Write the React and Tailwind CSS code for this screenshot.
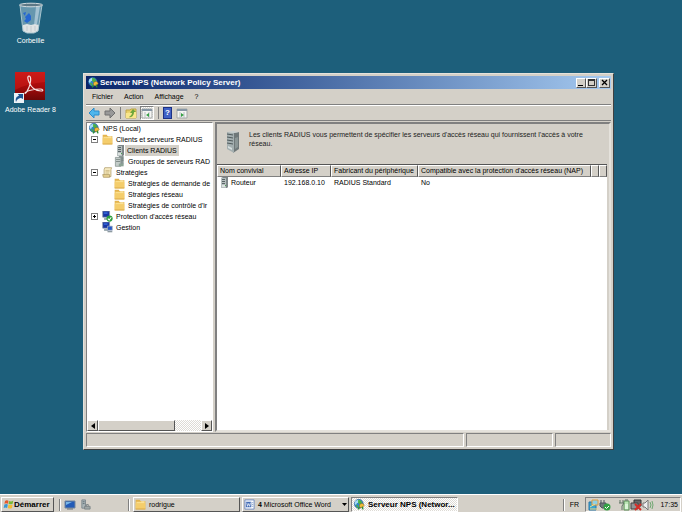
import { useState } from "react";

function GlobeIcon({ className = "h-[11px] w-[11px]" }) {
  return (
    <svg viewBox="0 0 16 16" className={`shrink-0 ${className}`} aria-hidden="true">
      <circle cx="7" cy="7" r="6.5" fill="#2d82d0" stroke="#1b4f80" strokeWidth=".7" />
      <path d="M2 3 6 1l3 1-2 3-3 1-1 3-2-2Z" fill="#a7dcf5" />
      <path d="M6 1l4 1 2 3-3 3-3-2ZM3 8l3 1 1 4-3-1Z" fill="#4caf45" />
      <path d="M8 8 12 6l3 3-3 4-4-1Z" fill="#f0b936" stroke="#8a6519" strokeWidth=".7" />
      <path d="M8 12 6 15M12 11l1 4" stroke="#2b8b37" strokeWidth="2" />
    </svg>
  );
}

function FolderIcon() {
  return (
    <svg viewBox="0 0 16 16" className="h-[11px] w-[11px] shrink-0" aria-hidden="true">
      <path d="M1 1h6l1 2h7v12H1Z" fill="#e3b44e" />
      <path d="M2 4h12v10H2Z" fill="#fbdf8c" />
      <path d="M1 6h14v9H1Z" fill="#f4cd6c" />
      <path d="M1 14.500h14" stroke="#cf9c3c" />
      <path d="M9 4h5" stroke="#fff3c9" />
    </svg>
  );
}

function ServerIcon({ className = "h-[11px] w-[7px]" }) {
  return (
    <svg viewBox="0 0 7 11" className={`shrink-0 ${className}`} aria-hidden="true">
      <path d="M0 1 2 0h5v10l-1 1H0Z" fill="#7d8688" />
      <path d="M0 1h5v10H0Z" fill="#b6bfbf" />
      <path d="M1 2.500h3M1 4.500h3M1 6.500h3" stroke="#596466" />
      <path d="M1 8h3v2H1Z" fill="#dbe1df" />
      <path d="M4 8h1v1H4Z" fill="#48a452" />
    </svg>
  );
}

function ServersIcon() {
  return (
    <svg viewBox="0 0 16 16" className="h-[11px] w-[11px] shrink-0" aria-hidden="true">
      <path d="M7 0h7v12H7Z" fill="#8b9897" />
      <path d="M2 2h8v13H2Z" fill="#c3ccc9" stroke="#7e8a88" />
      <path d="M3 5h6M3 8h6M11 3h3M11 6h3" stroke="#66716f" />
      <path d="M7 11h7v4H7Z" fill="#8ba295" />
    </svg>
  );
}

function BigServerIcon() {
  return (
    <svg viewBox="0 0 16 24" className="h-[24px] w-[16px] shrink-0" aria-hidden="true">
      <path d="m8 3 6-1v17l-6 4Z" fill="#6f7879" />
      <path d="m10 8 3-1v10l-3 2Z" fill="#8b9696" />
      <path d="M2 2 9 3v20l-7-4Z" fill="#a4afb0" />
      <path d="m2 2 6-1 6 1-5 1Z" fill="#c8cfcf" />
      <path d="m2 4 6 1M2 7l6 1M2 10l6 1M2 13l6 1" stroke="#4e595b" />
      <path d="m3 16 4 2v2l-4-2Z" fill="#d6dfdf" />
    </svg>
  );
}

function ScrollIcon() {
  return (
    <svg viewBox="0 0 16 16" className="h-[11px] w-[11px] shrink-0" aria-hidden="true">
      <path d="M4 1h10l-1 3v10H3V4Z" fill="#f7ecc4" stroke="#a9935e" />
      <path d="M1 11h10v4H2Z" fill="#e6d192" stroke="#a9935e" />
      <path d="M5 5h6M5 7h6M5 9h5" stroke="#c4ad73" />
    </svg>
  );
}

function ComputerIcon({ badge = false }) {
  return (
    <svg viewBox="0 0 16 16" className="h-[11px] w-[11px] shrink-0" aria-hidden="true">
      <path d="M1 0h10v9H1Z" fill="#1836a6" stroke="#8691a0" />
      <path d="M3 2h5v2H3Z" fill="#396ee1" />
      <path d="M3 10h6v3H3Z" fill="#9eacb0" />
      {badge ? (
        <>
          <circle cx="11" cy="11" r="4.500" fill="#2b9d3c" />
          <path d="m8.500 11 2 2 3-4" fill="none" stroke="#fff" strokeWidth="1.500" />
        </>
      ) : (
        <>
          <path d="M8 6h7v6H8Z" fill="#2457c7" stroke="#a7afb9" />
          <path d="M8 13h7v2H8Z" fill="#8e9ba2" />
        </>
      )}
    </svg>
  );
}

function RecycleBin() {
  return (
    <svg viewBox="0 0 26 32" className="h-[32px] w-[26px]" aria-hidden="true">
      <path d="M2 3h22l-4 26-4 2H9l-4-2Z" fill="#7fa9bf" fillOpacity=".75" />
      <path d="m5 23 4-1 4 1 4-1 4 1-1 6-4 2H9l-4-2Z" fill="#dfe3e4" />
      <path d="m18 5 4-1-3 18-3 1Z" fill="#cbe0e9" fillOpacity=".6" />
      <path d="m7 15 4-4 2 3v4l-4 3-3-2 2-2Zm-2-4 3-1-1 4Z" fill="#2467d1" />
      <path d="M9 24v5M13 24v6M17 24v5" stroke="#c3cbcf" />
      <path d="M2 3 5 29l4 2h7l4-2L24 3" fill="none" stroke="#a9c5cf" />
      <ellipse cx="13" cy="3" rx="11.500" ry="1.800" fill="#5d7886" stroke="#d3dcdf" />
    </svg>
  );
}

function AdobeIcon() {
  return (
    <svg viewBox="0 0 32 32" className="h-[32px] w-[32px]" aria-hidden="true">
      <defs>
        <linearGradient id="adobe" x1="0" y1="0" x2="0" y2="1">
          <stop stopColor="#c41414" />
          <stop offset=".5" stopColor="#a80b0b" />
          <stop offset="1" stopColor="#6d0606" />
        </linearGradient>
      </defs>
      <path d="M1 1h30v28H1Z" fill="url(#adobe)" />
      <path d="M1 1h30v10Q14 12 1 19Z" fill="#e02822" fillOpacity=".35" />
      <path d="M15 5c-2 0-1 4 0 6 2 5 6 9 12 9 3 0 2-2-1-2-6 0-14 2-15 4 0 2 4-4 5-9 1-4 1-8-1-8Z" fill="none" stroke="#f7e2e2" strokeWidth="1.200" />
      <path d="M0 22h10v10H0Z" fill="#edf2f7" />
      <path d="M2 31c-1-4 1-6 3-6l-1-2h5v5l-2-1c-2 0-4 1-5 4Z" fill="#1e5492" />
    </svg>
  );
}

function ArrowIcon({ forward = false }) {
  return (
    <svg viewBox="0 0 12 12" className="h-[12px] w-[12px]" aria-hidden="true">
      {forward ? (
        <path d="M1 4h5V1l5 5-5 5V8H1Z" fill="#999" stroke="#707070" />
      ) : (
        <path d="M11 4H6V1L1 6l5 5V8h5Z" fill="#4fb6ec" stroke="#2c8ccc" />
      )}
    </svg>
  );
}

function UpFolderIcon() {
  return (
    <svg viewBox="0 0 12 12" className="h-[12px] w-[12px]" aria-hidden="true">
      <path d="M1 3h4l1-1h5v9H1Z" fill="#e8cf66" stroke="#c0a648" />
      <path d="m1 6 10-1v6H1Z" fill="#f9e68b" />
      <path d="M4 10c2-1 3-3 3-4H5l3-4 3 3H9c0 3-2 6-5 5Z" fill="#6da63c" />
    </svg>
  );
}

function PanelIcon({ right = false }) {
  return (
    <svg viewBox="0 0 12 12" className="h-[12px] w-[12px]" aria-hidden="true">
      <path d="M1 2h10v9H1Z" fill="#f5f5f3" stroke="#a4a8a8" />
      <path d="M1 3h10" stroke="#8696a5" strokeWidth="2" />
      <path d="M4 5v6M8 5v6" stroke="#b5bcbf" />
      <path d={right ? "m5 6 3 2-3 2Z" : "m8 6-3 2 3 2Z"} fill="#35a044" />
    </svg>
  );
}

function HelpIcon() {
  return (
    <span className="flex h-[12px] w-[9px] items-center justify-center border border-[#1c3186] bg-[#3f60c5] text-[8px] font-bold text-white">
      ?
    </span>
  );
}

function StartIcon() {
  return (
    <svg viewBox="0 0 16 16" className="h-[11px] w-[11px] shrink-0" aria-hidden="true">
      <path d="M3 3c2-2 4-1 5 0L7 7C5 6 4 6 2 7Z" fill="#e6582c" />
      <path d="M9 3c2 1 4 1 6-1l-1 5c-2 1-4 1-6 0Z" fill="#78b934" />
      <path d="M2 8c2-1 4-1 5 0l-1 5c-2-1-3-1-5 0Z" fill="#3797d4" />
      <path d="M8 8c2 1 4 1 6 0l-1 5c-2 1-4 1-6 0Z" fill="#f3bd35" />
    </svg>
  );
}

function DesktopIcon() {
  return (
    <svg viewBox="0 0 12 10" className="h-[10px] w-[12px]" aria-hidden="true">
      <path d="M1 1h10v7H1Z" fill="#225bb7" stroke="#73879c" />
      <path d="m2 2 6 0-6 3Z" fill="#77b6e8" />
      <path d="M3 9h6" stroke="#66717a" />
    </svg>
  );
}

function ManagerIcon() {
  return (
    <svg viewBox="0 0 12 12" className="h-[11px] w-[11px]" aria-hidden="true">
      <path d="M2 1h4v9H2Z" fill="#aab5b8" stroke="#7d888d" />
      <path d="M3 3h2M3 5h2" stroke="#5d6d74" />
      <path d="M5 8h6v3H5Z" fill="#a0a8a8" stroke="#7c8485" />
      <path d="M7 8V6h2v2" fill="none" stroke="#7c8485" />
    </svg>
  );
}

function WordIcon() {
  return (
    <svg viewBox="0 0 12 12" className="h-[11px] w-[11px] shrink-0" aria-hidden="true">
      <path d="M1 1h10v10H1Z" fill="#fff" stroke="#6b88c0" />
      <path d="M2 3h6v6H2Z" fill="#3e68b4" />
      <path d="m3 4 .8 4L5 5l1.200 3L7 4" stroke="#fff" fill="none" strokeWidth=".8" />
      <path d="M9 4h1M9 6h1M9 8h1" stroke="#6b8dbd" />
    </svg>
  );
}

function TrayIcons() {
  return (
    <svg viewBox="0 0 66 12" className="h-[12px] w-[66px]" aria-hidden="true">
      <path d="M1 3h7v8H1Z" fill="#39a5d0" stroke="#2877aa" />
      <path d="M4 1h6v5H4Z" fill="#8ed0e5" stroke="#e39c3d" />
      <path d="m2 8 5-3M2 10h8" stroke="#f4dc87" />
      <path d="M13 1v3M16 1v3M12 4h6v3l-2 2h-2l-2-2Z" fill="#6e777c" stroke="#4b555c" />
      <circle cx="19" cy="8" r="3.500" fill="#31a144" />
      <path d="m17 8 1.500 1.500L21 7" stroke="#fff" fill="none" />
      <path d="M36 2h5v9h-5Z" fill="#bbe6b5" stroke="#5c8e5b" />
      <path d="M37 1h3M32 1v3M35 1v3M31 4h5l-2 3v4" fill="none" stroke="#5f7465" />
      <path d="M37 5h3v5h-3Z" fill="#dbf4d8" />
      <path d="M46 1h7v6h-7Z" fill="#66686a" stroke="#333" />
      <path d="M43 4h7v6h-7Z" fill="#909597" stroke="#444" />
      <path d="m47 5 6 6M53 5l-6 6" stroke="#d42d28" strokeWidth="2" />
      <path d="M55 4h2l3-3v10l-3-3h-2Z" fill="#eee" stroke="#777" />
      <path d="M62 3q2 3 0 6M64 2q2 4 0 8" stroke="#6ea670" fill="none" />
    </svg>
  );
}

const treeItems = [
  { label: "NPS (Local)", icon: <GlobeIcon />, indent: "pl-[2px]" },
  { label: "Clients et serveurs RADIUS", icon: <FolderIcon />, indent: "pl-[4px]", toggle: "-" },
  { label: "Clients RADIUS", icon: <ServerIcon />, indent: "pl-[30px]" },
  { label: "Groupes de serveurs RAD", icon: <ServersIcon />, indent: "pl-[27px]" },
  { label: "Stratégies", icon: <ScrollIcon />, indent: "pl-[4px]", toggle: "-" },
  { label: "Stratégies de demande de", icon: <FolderIcon />, indent: "pl-[27px]" },
  { label: "Stratégies réseau", icon: <FolderIcon />, indent: "pl-[27px]" },
  { label: "Stratégies de contrôle d'ir", icon: <FolderIcon />, indent: "pl-[27px]" },
  { label: "Protection d'accès réseau", icon: <ComputerIcon badge />, indent: "pl-[4px]", toggle: "+" },
  { label: "Gestion", icon: <ComputerIcon />, indent: "pl-[15px]" },
];

const headers = ["Nom convivial", "Adresse IP", "Fabricant du périphérique", "Compatible avec la protection d'accès réseau (NAP)", "", ""];

const raised = "border border-t-white border-l-white border-r-[#555] border-b-[#555] bg-[#d4d0c8]";
const sunken = "border border-t-[#808080] border-l-[#808080] border-r-white border-b-white";
const checker = "bg-[repeating-conic-gradient(#fff_0_25%,#dedbd5_0_50%)] bg-[size:2px_2px]";

function TitleBar() {
  return (
    <header className="flex h-[13px] shrink-0 items-center bg-linear-to-r from-[#0a246a] to-[#a6caf0] pr-px pl-[2px] text-white">
      <GlobeIcon />
      <h1 className="ml-px flex-1 truncate text-[8px] font-bold">
        Serveur NPS (Network Policy Server)
      </h1>
      <button type="button" aria-label="Réduire" className={`flex h-[10px] w-[10px] items-end p-px ${raised}`}>
        <span className="h-px w-[5px] bg-black" />
      </button>
      <button type="button" aria-label="Agrandir" className={`flex h-[10px] w-[11px] items-center justify-center ${raised}`}>
        <span className="h-[7px] w-[7px] border border-t-2 border-[#333]" />
      </button>
      <button type="button" aria-label="Fermer" className={`ml-[2px] flex h-[10px] w-[11px] items-center justify-center ${raised}`}>
        <svg viewBox="0 0 7 7" className="h-[7px] w-[7px]" aria-hidden="true">
          <path d="m1 1 5 5M6 1 1 6" stroke="#000" strokeWidth="1.300" />
        </svg>
      </button>
    </header>
  );
}

function Toolbar() {
  return (
    <div className="flex h-[16px] shrink-0 items-center border-t border-b border-t-white border-b-[#808080] px-[2px]">
      <button type="button" aria-label="Précédent"><ArrowIcon /></button>
      <button type="button" aria-label="Suivant" className="ml-[4px]"><ArrowIcon forward /></button>
      <span className="mx-[4px] h-[12px] w-px bg-[#808080]" />
      <button type="button" aria-label="Dossier parent"><UpFolderIcon /></button>
      <button type="button" aria-label="Arborescence" className={`ml-[3px] ${sunken} ${checker}`}><PanelIcon /></button>
      <span className="mx-[4px] h-[12px] w-px bg-[#808080]" />
      <button type="button" aria-label="Aide"><HelpIcon /></button>
      <button type="button" aria-label="Volet Actions" className="ml-[4px]"><PanelIcon right /></button>
    </div>
  );
}

function Tree() {
  const [selected, setSelected] = useState("Clients RADIUS");

  return (
    <nav className={`flex w-[127px] shrink-0 flex-col bg-white ${sunken}`}>
      <ul className="flex-1 overflow-hidden">
        {treeItems.map((item) => (
          <li key={item.label} className={`flex h-[11px] items-center ${item.indent}`}>
            {item.toggle && (
              <button type="button" aria-label={item.label} className="mr-[4px] flex h-[7px] w-[7px] shrink-0 items-center justify-center border border-[#808080]">
                <svg viewBox="0 0 3 3" className="h-[3px] w-[3px]" aria-hidden="true">
                  <path d={item.toggle === "+" ? "M0 1.500h3M1.500 0v3" : "M0 1.500h3"} stroke="#000" />
                </svg>
              </button>
            )}
            {item.icon}
            <button
              type="button"
              onClick={() => setSelected(item.label)}
              className={`ml-px h-[11px] px-[2px] whitespace-nowrap ${selected === item.label ? "bg-[#d4d0c8]" : ""}`}
            >
              {item.label}
            </button>
          </li>
        ))}
      </ul>
      <div className={`flex h-[11px] shrink-0 ${checker}`}>
        <button type="button" aria-label="Défiler à gauche" className={`flex w-[11px] items-center justify-center ${raised}`}>
          <svg viewBox="0 0 4 6" className="h-[6px] w-[4px]" aria-hidden="true"><path d="M4 0v6L0 3Z" /></svg>
        </button>
        <span className={`w-[77px] ${raised}`} />
        <button type="button" aria-label="Défiler à droite" className={`ml-auto flex w-[11px] items-center justify-center ${raised}`}>
          <svg viewBox="0 0 4 6" className="h-[6px] w-[4px]" aria-hidden="true"><path d="M0 0v6l4-3Z" /></svg>
        </button>
      </div>
    </nav>
  );
}

function ClientList() {
  return (
    <section className="ml-[2px] flex min-w-0 flex-1 flex-col border-2 border-t-[#808080] border-r-[#e5e2dc] border-b-[#e5e2dc] border-l-[#808080]">
      <div className="flex h-[40px] shrink-0 items-start px-[8px] pt-[6px]">
        <BigServerIcon />
        <p className="ml-[8px] max-w-[352px] leading-[9px] text-[#222]">
          Les clients RADIUS vous permettent de spécifier les serveurs d'accès réseau qui fournissent l'accès à votre réseau.
        </p>
      </div>
      <div className="mr-[2px] flex-1 border-t border-t-[#555] bg-white">
        <table className="w-full table-fixed border-separate border-spacing-0 text-left">
          <colgroup>
            <col className="w-[64px]" />
            <col className="w-[50px]" />
            <col className="w-[87px]" />
            <col className="w-[173px]" />
            <col className="w-[8px]" />
            <col />
          </colgroup>
          <thead>
            <tr>
              {headers.map((header, i) => (
                <th key={i} className="h-[11px] overflow-hidden border border-t-white border-r-[#555] border-b-[#808080] border-l-white bg-[#d4d0c8] p-0 pl-[2px] font-normal whitespace-nowrap">
                  {header}
                </th>
              ))}
            </tr>
          </thead>
          <tbody>
            <tr className="h-[11px]">
              <td className="p-0 pl-[4px]">
                <span className="flex items-center gap-[3px]"><ServerIcon />Routeur</span>
              </td>
              <td className="p-0 pl-[3px] whitespace-nowrap">192.168.0.10</td>
              <td className="p-0 pl-[3px]">RADIUS Standard</td>
              <td className="p-0 pl-[3px]">No</td>
              <td className="p-0" />
              <td className="p-0" />
            </tr>
          </tbody>
        </table>
      </div>
    </section>
  );
}

function Taskbar() {
  const separator = "h-[12px] w-px shrink-0 bg-[#808080] shadow-[1px_0_0_#fff]";
  return (
    <footer className="flex h-[18px] shrink-0 items-center border-t border-white bg-[#d4d0c8] px-px pt-[2px]">
      <button type="button" className={`flex h-[15px] w-[53px] shrink-0 items-center px-px text-[8px] font-bold ${raised}`}>
        <StartIcon />Démarrer
      </button>
      <span className={`ml-[5px] ${separator}`} />
      <button type="button" aria-label="Bureau" className="ml-[4px]"><DesktopIcon /></button>
      <button type="button" aria-label="Gestionnaire de serveur" className="ml-[4px]"><ManagerIcon /></button>
      <span className={`ml-[37px] ${separator}`} />
      <div className="ml-[4px] flex min-w-0 flex-1 gap-[2px]">
        <button type="button" className={`flex h-[15px] w-[107px] items-center gap-[3px] px-px ${raised}`}><FolderIcon />rodrigue</button>
        <button type="button" className={`flex h-[15px] w-[107px] items-center gap-[3px] px-px whitespace-nowrap ${raised}`}>
          <WordIcon /><span className="flex-1 text-left"><b>4</b> Microsoft Office Word</span>
          <svg viewBox="0 0 5 3" className="h-[3px] w-[5px]" aria-hidden="true"><path d="M0 0h5L2.500 3Z" /></svg>
        </button>
        <button type="button" className={`flex h-[15px] w-[107px] items-center gap-[3px] px-[2px] text-[8px] font-bold whitespace-nowrap ${sunken} ${checker}`}>
          <GlobeIcon />Serveur NPS (Networ...
        </button>
      </div>
      <span className={separator} />
      <button type="button" className="mx-[6px]">FR</button>
      <div className={`flex h-[15px] w-[96px] shrink-0 items-center justify-between px-[2px] ${sunken}`}>
        <TrayIcons />
        <time>17:35</time>
      </div>
    </footer>
  );
}

export default function App() {
  return (
    <div className="flex min-h-screen flex-col bg-[#1d5f7b] font-['Liberation_Sans',Arial,sans-serif] text-[7px] leading-[10px] text-black">
      <main className="flex flex-1">
        <div className="flex w-[61px] shrink-0 flex-col items-center text-white">
          <button type="button" className="flex flex-col items-center pt-[2px]">
            <RecycleBin /><span className="mt-[2px]">Corbeille</span>
          </button>
          <button type="button" className="mt-[25px] flex flex-col items-center whitespace-nowrap">
            <AdobeIcon /><span className="mt-[2px]">Adobe Reader 8</span>
          </button>
        </div>
        <section className="mt-[73px] mr-[68px] mb-[44px] ml-[22px] flex min-w-0 flex-1 flex-col border border-t-[#e5e2dc] border-r-[#404040] border-b-[#404040] border-l-[#e5e2dc] bg-[#d4d0c8] p-[2px]">
          <TitleBar />
          <nav className="flex h-[16px] shrink-0 items-center gap-[11px] border-b border-b-[#808080] px-[6px]">
            <button type="button">Fichier</button>
            <button type="button">Action</button>
            <button type="button">Affichage</button>
            <button type="button">?</button>
          </nav>
          <Toolbar />
          <div className="mt-px flex flex-1">
            <Tree />
            <ClientList />
          </div>
          <div className="mt-px flex h-[14px] shrink-0 gap-[2px]">
            <span className={`flex-1 ${sunken}`} />
            <span className={`w-[87px] ${sunken}`} />
            <span className={`w-[56px] ${sunken}`} />
          </div>
        </section>
      </main>
      <Taskbar />
    </div>
  );
}
